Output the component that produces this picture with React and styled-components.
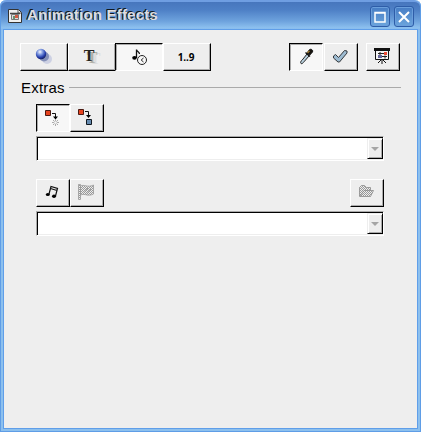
import React from 'react';
import styled, { createGlobalStyle } from 'styled-components';

const GlobalStyle = createGlobalStyle`
  * { box-sizing: border-box; }
  body { margin: 0; background: #fff; font-family: "Liberation Sans", Arial, sans-serif; }
`;

const Window = styled.div`
  width: 421px;
  height: 432px;
  display: flex;
  flex-direction: column;
  padding: 0 4px 4px;
  overflow: hidden;
  border-radius: 6px 6px 0 0;
  background: #8cc0ee;
  box-shadow: inset 1px 0 #5f9de6, inset -1px -1px #5f9de6;
`;

const TitleBar = styled.header`
  height: 30px;
  flex: none;
  margin: 0 -3px;
  padding: 0 6px 0 6px;
  display: flex;
  align-items: center;
  border-top: 2px solid #6f9ee2;
  border-radius: 6px 6px 0 0;
  background: linear-gradient(#4776bd 0, #4e80c6 8px, #6da2dd 19px, #8dc1ef 26px, #7fb4ed 100%);
`;

const Title = styled.h1`
  flex: 1;
  margin: -3px 0 0 5px;
  font-size: 15px;
  line-height: 20px;
  font-weight: bold;
  letter-spacing: 0.2px;
  color: #dedede;
  text-shadow: -1px -1px #101820, -1px 0 #101820;
  white-space: nowrap;
`;

const WindowButton = styled.button`
  width: 20px;
  height: 21px;
  margin: 1px 0 0 4px;
  padding: 0;
  display: flex;
  align-items: center;
  justify-content: center;
  border: 1px solid #2e5da8;
  border-radius: 3px;
  background: linear-gradient(#467cc4, #6ba4dc);
  box-shadow: inset 0 0 0 1px #6a9edb;
`;

const Content = styled.main`
  flex: 1;
  padding: 13px 15px 0;
  background: #eee;
  box-shadow: 0 0 0 1px #5f9ee9;
`;

const Bar = styled.div`
  display: flex;
  height: 28px;
  margin-top: ${p => p.$top || 0}px;
  margin-left: ${p => p.$left || 0}px;
  margin-right: ${p => p.$right || 0}px;
`;

const Group = styled.div`
  display: flex;
  gap: ${p => p.$gap || 0}px;
  margin-left: ${p => p.$end ? 'auto' : '0'};
`;

const ToolButton = styled.button`
  width: ${p => p.$wide ? 48 : 34}px;
  height: 28px;
  padding: 0;
  margin-left: ${p => p.$shift || 0}px;
  display: flex;
  align-items: center;
  justify-content: center;
  border: 1px solid;
  border-color: ${p => p.$pressed ? '#000 #fff #fff #000' : '#fff #000 #000 #fff'};
  background: ${p => p.$pressed ? '#f7f7f7' : '#eee'};
  box-shadow: ${p => p.$pressed ? 'inset 1px 1px #aaa' : 'inset -1px -1px #aaa'};
  color: #000;
`;

const NumberLabel = styled.span`
  margin: -1px 2px 0 0;
  font: bold 10px/12px "Noto Sans", sans-serif;
  letter-spacing: -0.1px;
`;

const SectionTitle = styled.div`
  display: flex;
  align-items: center;
  height: 20px;
  margin: 7px 1px 6px 2px;
`;

const SectionName = styled.h2`
  width: 48px;
  margin: 0;
  font-size: 15px;
  line-height: 20px;
  font-weight: normal;
  letter-spacing: 0.2px;
  white-space: nowrap;
`;

const Rule = styled.hr`
  flex: 1;
  height: 1px;
  margin: 0 0 1px;
  border: 0;
  background: #aaa;
`;

const Combo = styled.div`
  height: 25px;
  margin: 4px 18px 0 17px;
  display: flex;
  justify-content: flex-end;
  border: 1px solid;
  border-color: #aaa #fff #fff #aaa;
  background: #fff;
  box-shadow: inset 1px 1px #000, inset 0 -1px #eee;
`;

const Arrow = styled.div`
  width: 16px;
  height: 21px;
  margin-top: 1px;
  display: flex;
  align-items: center;
  justify-content: center;
  border: 1px solid;
  border-color: #eee #000 #000 #eee;
  background: #eee;
  box-shadow: inset 1px 1px #fff, inset -1px -1px #aaa;
`;

const Glyph = styled.svg`
  display: block;
  flex: none;
  overflow: visible;
  transform: translate(${p => p.$x || 0}px, ${p => p.$y || 0}px);
`;

const Svg = ({ size = 20, h, children, ...props }) => (
  <Glyph width={size} height={h || size} viewBox={`0 0 ${size} ${h || size}`} fill="none" aria-hidden="true" {...props}>{children}</Glyph>
);

const AppIcon = () => (
  <Svg size={15} $x={1} $y={-1}>
    <path d="M.5 1.5h10l3 3v10H.5z" fill="#efefef" stroke="#333"/>
    <path d="M10 2v3h3" fill="#fff" stroke="#555"/>
    <path d="M2 5.5h10" stroke="#444" strokeWidth="1.5"/>
    <path d="M3.5 6.5h7v5h-7z" fill="#ddd" stroke="#777"/>
    <path d="M5 8h2v3H5z" fill="#68906e"/><path d="M7 7h3v3H7z" fill="#d55c44"/>
  </Svg>
);

const Spheres = () => (
  <Svg>
    <defs><radialGradient id="ball" cx=".4" cy=".3" r=".7">
      <stop stopColor="#f4f7ff"/><stop offset=".4" stopColor="#7893dc"/><stop offset=".75" stopColor="#263eac"/><stop offset="1" stopColor="#142065"/>
    </radialGradient></defs>
    <circle cx="13" cy="12" r="5" fill="#cdd1e3"/>
    <circle cx="10" cy="9.5" r="5" fill="#8490b8"/>
    <circle cx="7" cy="7" r="5.2" fill="url(#ball)"/>
  </Svg>
);

const Letters = styled.span`
  font: bold 16px/20px "Liberation Serif", serif;
  color: #24231d;
  margin: -3px 6px 0 0;
  text-shadow: 3px 2px #b0b0a8, 6px 3px #ddd;
`;

const NoteClock = () => (
  <Svg>
    <path d="M7.5 11V2.5c0 2 3 2 3 4.5" stroke="#111" strokeWidth="1.3"/>
    <ellipse cx="5.5" cy="10.8" rx="2.3" ry="1.9" fill="#000"/>
    <circle cx="13" cy="13" r="4.5" fill="#f7f7f7" stroke="#222"/>
    <path d="m14.5 11-2.3 2 2.3 2" stroke="#222"/>
  </Svg>
);

const Dropper = () => (
  <Svg>
    <path d="M5 16.5c-1-1 .2-2.8 1-3.2L11 7l2 2-5 5.8c-.8.9-2 2.5-3 1.7z" fill="#b9d1df" stroke="#222"/>
    <path d="m9.5 5.5 4.5 4" stroke="#111" strokeWidth="1.5"/>
    <path d="m11 6.2 2-3c1-1.8 4.5-.8 3.5 1.8L13.8 8z" fill="#16130d" stroke="#111"/>
    <path d="m11.5 6 2-2.2" stroke="#98752f" strokeWidth="1.5"/>
  </Svg>
);

const Check = () => (
  <Svg>
    <path d="m2.5 9 2-1.5 3 3 6-7 2.5.5v2l-7.5 9H7l-4.5-4z" fill="#9dbbd1" stroke="#34383c" strokeLinejoin="round"/>
  </Svg>
);

const Presentation = () => (
  <Svg $x={-1} $y={-1}>
    <path d="M3.5 4v9.5h13V4" fill="#f5f5f5" stroke="#111"/>
    <path d="M2 2h16v3H2z" fill="#111"/>
    <path d="M6 9h4v3H6z" fill="#66669b"/><path d="M12 6h3v3h-3z" fill="#ed4b35"/>
    <path d="M6 7.5h6m-2 3h5M8 6v3m5 .5v3" stroke="#222"/>
    <path d="M10 14v4m-1-4-3 3m5-3 3 3" stroke="#111"/>
  </Svg>
);

const Transition = ({ fade }) => (
  <Svg>
    {fade ? <>
      <path d="M2.5 2.5h5v5h-5z" fill="#e7441f" stroke="#4b1a12"/>
      <path d="M9 5.5h3.5v4" stroke="#111"/><path d="M10 8.5h5l-2.5 3z" fill="#000"/>
      <path d="M12.5 11v7M9 14.5h7m-6-2.5 5 5m0-5-5 5" stroke="#aaa"/><circle cx="12.5" cy="14.5" r="1.5" fill="#f7f7f7" stroke="#bbb" strokeWidth=".5"/>
    </> : <>
      <path d="M1.5 1.5h5v5h-5z" fill="#e7441f" stroke="#4b1a12"/>
      <path d="M8 3.5h3.5v4" stroke="#111"/><path d="M9 7h5l-2.5 3z" fill="#000"/>
      <path d="M9.5 11.5h5v5h-5z" fill="#668bb0" stroke="#101820"/>
    </>}
  </Svg>
);

const Notes = () => (
  <Svg>
    <path d="m6 11 2-7.5 6.5 2-2 7.5M7.5 5.5l6.5 2" stroke="#111" strokeWidth="1.2"/>
    <ellipse cx="4.8" cy="11.5" rx="2" ry="1.6" fill="#000"/><ellipse cx="11" cy="13.3" rx="2" ry="1.7" fill="#000"/>
  </Svg>
);

const Checker = ({ id }) => (
  <defs><pattern id={id} width="2" height="2" patternUnits="userSpaceOnUse">
    <path d="M0 0h1v1H0zM1 1h1v1H1z" fill="#999"/>
  </pattern></defs>
);

const Flag = () => (
  <Svg>
    <Checker id="flagFill"/>
    <path d="M1.5 1.5h2v15h-2zM3.5 3c4-2 7 2 13-1v9c-6 3-8-1-13 1z" fill="url(#flagFill)" stroke="#999"  strokeWidth=".8"/>
    <path d="m7 10 4-5m-1 6 4-5" stroke="#999"/>
  </Svg>
);

const Folder = () => (
  <Svg>
    <Checker id="folderFill"/>
    <path d="M2.5 13.5v-9l2-2h3l2 2h4v3h3l-3 6zM3 13l4-5.5h7" fill="url(#folderFill)" stroke="#8c8c8c" strokeWidth=".8"/>
  </Svg>
);

const ComboBox = () => (
  <Combo role="combobox" aria-expanded="false" aria-disabled="true">
    <Arrow><Svg size={8} h={4}><path d="M0 0h8L4 4z" fill="#a5a5a5"/></Svg></Arrow>
  </Combo>
);

export default function App() {
  return (
    <>
      <GlobalStyle/>
      <Window>
        <TitleBar>
          <AppIcon/><Title>Animation Effects</Title>
          <WindowButton aria-label="Maximize"><Svg size={12}><path d="M1 1.5h10v9.5H1zM1 2h10" stroke="#fff" strokeWidth="1.5"/></Svg></WindowButton>
          <WindowButton aria-label="Close"><Svg size={12}><path d="m1 1 10 10M11 1 1 11" stroke="#fff" strokeWidth="2"/></Svg></WindowButton>
        </TitleBar>
        <Content>
          <Bar $left={1} $right={2}>
            <Group>
              <ToolButton $wide aria-label="Effects"><Spheres/></ToolButton>
              <ToolButton $wide aria-label="Text effects"><Letters>T</Letters></ToolButton>
              <ToolButton $wide $shift={-1} $pressed aria-label="Extras"><NoteClock/></ToolButton>
              <ToolButton $wide><NumberLabel>1..9</NumberLabel></ToolButton>
            </Group>
            <Group $end $gap={1}>
              <ToolButton $pressed aria-label="Update"><Dropper/></ToolButton>
              <ToolButton aria-label="Assign"><Check/></ToolButton>
              <ToolButton $shift={7} aria-label="Preview"><Presentation/></ToolButton>
            </Group>
          </Bar>
          <SectionTitle><SectionName>Extras</SectionName><Rule/></SectionTitle>
          <Bar $left={17} $right={18}>
            <ToolButton $pressed aria-label="Object invisible"><Transition fade/></ToolButton>
            <ToolButton aria-label="Fade object with color"><Transition/></ToolButton>
          </Bar>
          <ComboBox/>
          <Bar $top={18} $left={17} $right={18}>
            <Group>
              <ToolButton aria-label="Sound"><Notes/></ToolButton>
              <ToolButton disabled aria-label="Play in full"><Flag/></ToolButton>
            </Group>
            <Group $end><ToolButton disabled aria-label="Browse"><Folder/></ToolButton></Group>
          </Bar>
          <ComboBox/>
        </Content>
      </Window>
    </>
  );
}
